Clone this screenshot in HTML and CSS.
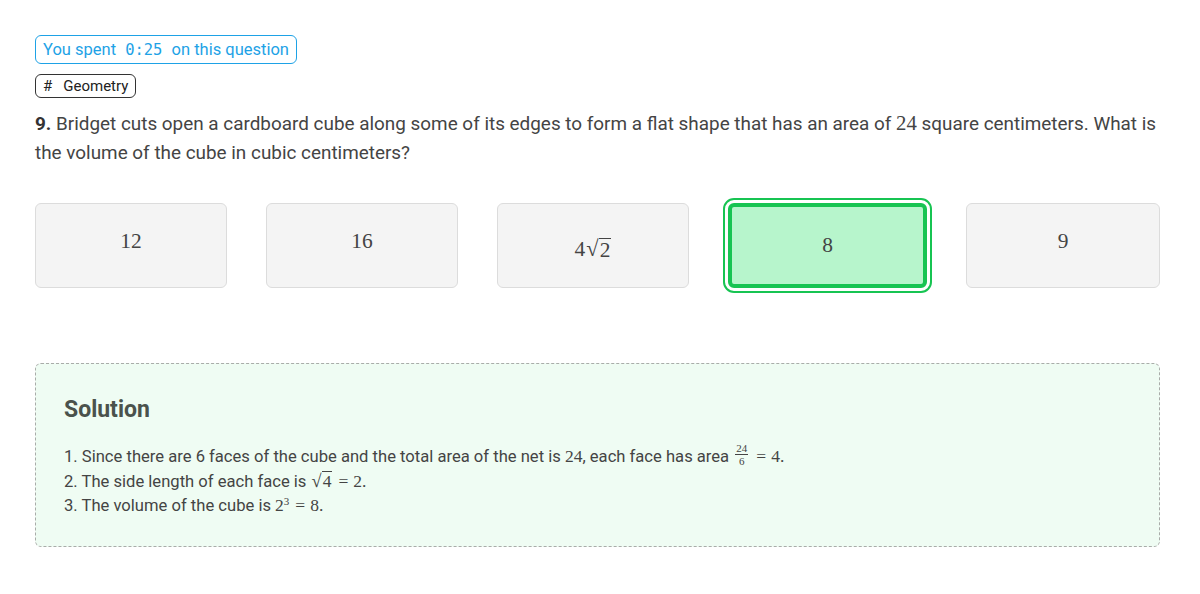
FILE: index.html
```html
<!DOCTYPE html>
<html lang="en">
	<head>
		<meta charset="UTF-8" />
		<meta name="viewport" content="initial-scale=1,width=device-width" />
		<title>Question 9</title>
		<link rel="stylesheet" href="styles.css">
	</head>

	<body>
		<div class="wrapper">
			<div class="meta">
				<span class="timer">You spent <code class="timer__time">0:25</code> on this question</span>
				<span class="tag"><span class="tag__hash">#</span> Geometry</span>
			</div>

			<p class="question"><b>9.</b> Bridget cuts open a cardboard cube along some of its edges to form a flat shape that has an area of <span class="math">24</span> square centimeters. What is the volume of the cube in cubic centimeters?</p>

			<div class="choices">
				<button class="choice"><span class="math">12</span></button>
				<button class="choice"><span class="math">16</span></button>
				<button class="choice choice_sqrt"><span class="math">4<span class="sqrt"><span class="sqrt__sign">√</span><span class="sqrt__body">2</span></span></span></button>
				<button class="choice choice_correct"><span class="math">8</span></button>
				<button class="choice"><span class="math">9</span></button>
			</div>

			<section class="solution">
				<h2 class="solution__title">Solution</h2>
				<div class="solution__line">1. Since there are 6 faces of the cube and the total area of the net is <span class="math">24</span>, each face has area <span class="frac"><span class="frac__num">24</span><span class="frac__den">6</span></span><span class="math"><span class="eq">=</span>4.</span></div>
				<div class="solution__line">2. The side length of each face is <span class="math"><span class="sqrt"><span class="sqrt__sign">√</span><span class="sqrt__body">4</span></span><span class="eq">=</span>2.</span></div>
				<div class="solution__line">3. The volume of the cube is <span class="math">2<sup class="sup">3</sup><span class="eq">=</span>8.</span></div>
			</section>
		</div>
	</body>
</html>
```

FILE: styles.css
```css
html {
	box-sizing: border-box;
}

*,
*::after,
*::before {
	box-sizing: inherit;
}

body {
	margin: 0;
	background-color: #fff;
	color: #444;
	font-family: Roboto, "Liberation Sans", sans-serif;
	-webkit-font-smoothing: antialiased;
}

.wrapper {
	width: 1125px;
	margin-left: 35px;
	padding-top: 35px;
}

.meta {
	display: flex;
	flex-direction: column;
	align-items: flex-start;
	gap: 10px;
}

.timer {
	display: inline-flex;
	align-items: center;
	height: 29px;
	padding: 0 7px;
	border: 1px solid #1ea2e6;
	border-radius: 6px;
	color: #1ea2e6;
	font-size: 16.5px;
	white-space: pre;
}

.timer__time {
	font-family: "DejaVu Sans Mono", monospace;
	font-size: 15.5px;
	margin: 0 5px;
}

.tag {
	display: inline-flex;
	align-items: center;
	height: 24px;
	padding: 0 7px;
	border: 1px solid #333;
	border-radius: 6px;
	color: #222;
	font-size: 15px;
}

.tag__hash {
	margin-right: 11px;
	font-size: 15px;
}

.question {
	margin: 11px 0 0;
	font-size: 18.9px;
	line-height: 29px;
	color: #444;
}

.question b {
	color: #333;
}

.math {
	font-family: "Liberation Serif", serif;
	font-size: 1.1em;
	line-height: 1;
}

.eq {
	margin: 0 5px 0 6px;
}

.choices {
	display: grid;
	grid-template-columns: 192px 192px 192px 199px 1fr;
	gap: 39px;
	margin-top: 36px;
}

.choice {
	height: 85px;
	padding: 0 0 8px;
	border: 1px solid #dcdcdc;
	border-radius: 6px;
	background-color: #f4f4f4;
	color: #444;
	font-size: 19.5px;
	cursor: pointer;
}

.choice_sqrt {
	padding: 8px 0 0;
}

.choice_correct {
	padding: 0;
	border: 4px solid #17c452;
	background-color: #b7f5cc;
	outline: 2px solid #17c452;
	outline-offset: 3px;
}

.sqrt {
	display: inline-flex;
	align-items: flex-end;
}

.sqrt__sign {
	font-size: 1.05em;
	margin-left: 1px;
}

.sqrt__body {
	border-top: 1px solid #444;
	line-height: 1;
	padding: 1px 1px 0;
}

.solution {
	margin-top: 75px;
	padding: 32px 28px 28px;
	border: 1px dashed #a9aca9;
	border-radius: 6px;
	background-color: #effcf3;
}

.solution__title {
	margin: 0 0 21px;
	font-size: 23px;
	font-weight: 700;
	color: #4a524c;
}

.solution__line {
	font-size: 16.6px;
	line-height: 24px;
	color: #444;
}

.solution__line:first-of-type {
	line-height: 26px;
}

.solution__line .math {
	font-size: 17.5px;
}

.frac {
	display: inline-flex;
	flex-direction: column;
	align-items: center;
	vertical-align: middle;
	margin: 0 2px;
	font-family: "Liberation Serif", serif;
	font-size: 11px;
	line-height: 1.1;
	position: relative;
	top: -3px;
}

.frac__num {
	border-bottom: 1px solid #444;
	padding: 0 1px;
}

.sup {
	font-size: 11px;
	line-height: 0;
	vertical-align: 6px;
}
```
